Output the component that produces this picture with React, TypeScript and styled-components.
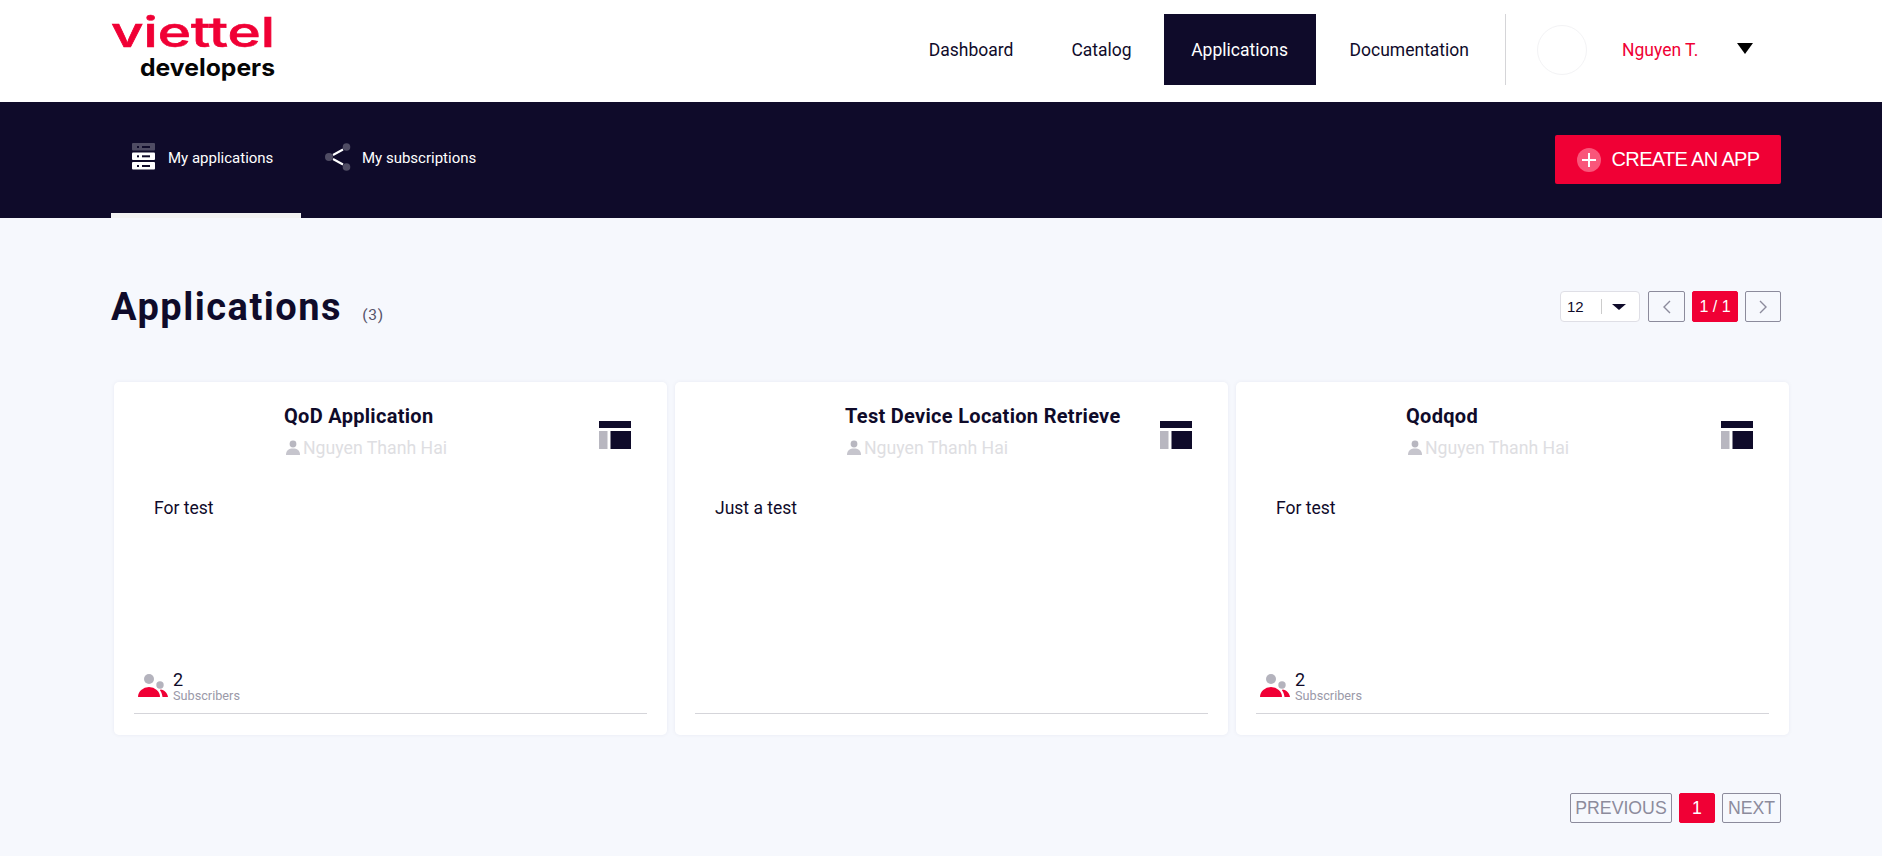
import React from "react";
import styled, { createGlobalStyle } from "styled-components";

const BODY_FONT = `"Roboto", "Noto Sans", sans-serif`;
const ARIAL = `"Liberation Sans", Arial, sans-serif`;
const NAVY = "#0f0b2a";
const RED = "#f00035";

const GlobalStyle = createGlobalStyle`
  * { box-sizing: border-box; }
  html, body { margin: 0; padding: 0; }
  body {
    background: #f6f8fd;
    font-family: ${BODY_FONT};
    color: ${NAVY};
    overflow: hidden;
  }
`;

const Page = styled.div`
  height: 856px;
  display: flex;
  flex-direction: column;
`;

const Header = styled.header`
  height: 102px;
  background: #fff;
  padding: 14px 129px 0 111px;
  display: flex;
  justify-content: space-between;
  align-items: flex-start;
`;

const LogoBox = styled.svg`
  display: block;
  margin-top: -8px;
  width: 170px;
  height: 82px;
`;

const NavArea = styled.div`
  display: flex;
  align-items: flex-start;
`;

const NavItem = styled.a<{ $active?: boolean }>`
  height: 71px;
  display: flex;
  align-items: center;
  padding: 0 ${(p) => (p.$active ? "27.5px" : "29px")};
  margin: 0 ${(p) => (p.$active ? "5px 0 3px" : "0")};
  font-size: 17.5px;
  color: ${(p) => (p.$active ? "#fff" : NAVY)};
  background: ${(p) => (p.$active ? NAVY : "transparent")};
`;

const UserBox = styled.div`
  height: 71px;
  margin-left: 7px;
  padding-left: 31px;
  border-left: 1px solid #d5d5d8;
  display: flex;
  align-items: center;
`;

const Avatar = styled.div`
  width: 50px;
  height: 50px;
  border-radius: 50%;
  border: 1px solid #f3f3f5;
`;

const UserName = styled.span`
  margin-left: 35px;
  width: 115px;
  font-size: 17.5px;
  color: ${RED};
`;

const CaretDown = styled.span`
  width: 0;
  height: 0;
  border-left: 8px solid transparent;
  border-right: 8px solid transparent;
  border-top: 11px solid #000;
`;

const HeaderCaret = styled(CaretDown)`
  margin-top: -3px;
`;

const SubBar = styled.div`
  height: 116px;
  background: ${NAVY};
  padding: 0 101px 0 111px;
  display: flex;
  justify-content: space-between;
`;

const Tabs = styled.div`
  display: flex;
`;

const Tab = styled.a<{ $active?: boolean }>`
  width: ${(p) => (p.$active ? "190px" : "auto")};
  height: 116px;
  padding: 41px 0 0 ${(p) => (p.$active ? "21px" : "24px")};
  display: flex;
  align-items: flex-start;
  gap: ${(p) => (p.$active ? "12px" : "11px")};
  font-size: 15px;
  line-height: 26px;
  color: #fff;
  border-bottom: 5px solid ${(p) => (p.$active ? "#f2f2f2" : "transparent")};
`;

const TabLabel = styled.span`
  margin-top: 2px;
`;

const TabIcon = styled.svg`
  display: block;
  flex: none;
`;

const CreateButton = styled.button`
  margin-top: 33px;
  width: 226px;
  height: 49px;
  border: 0;
  border-radius: 2px;
  background: ${RED};
  color: #fff;
  font-family: ${ARIAL};
  font-size: 20px;
  letter-spacing: -0.65px;
  display: flex;
  align-items: center;
  justify-content: center;
  gap: 11px;
  padding: 0;
`;

const PlusBadge = styled.span`
  width: 24px;
  height: 24px;
  border-radius: 50%;
  background: #f9567a;
  position: relative;
  &::before,
  &::after {
    content: "";
    position: absolute;
    background: #fff;
    left: 5px;
    top: 11px;
    width: 14px;
    height: 2px;
  }
  &::after {
    left: 11px;
    top: 5px;
    width: 2px;
    height: 14px;
  }
`;

const Main = styled.main`
  padding: 73px 101px 0 111px;
  flex: 1;
`;

const TitleRow = styled.div`
  height: 31px;
  display: flex;
  justify-content: space-between;
  align-items: center;
`;

const Title = styled.h1`
  margin: 9px 0 0;
  font-size: 38px;
  font-weight: 700;
  letter-spacing: 1.5px;
  line-height: 31px;
  display: flex;
  align-items: baseline;
`;

const Count = styled.span`
  margin-left: 20px;
  font-size: 15.5px;
  font-weight: 400;
  color: #55536a;
  letter-spacing: 0.8px;
`;

const Pager = styled.div`
  display: flex;
  gap: 7px;
`;

const SizeSelect = styled.div`
  width: 80px;
  height: 31px;
  background: #fff;
  border: 1px solid #dfdfe6;
  border-radius: 4px;
  font-family: ${ARIAL};
  font-size: 15px;
  display: flex;
  align-items: center;
  padding-left: 6px;
  margin-right: 1px;
`;

const SelectText = styled.span`
  width: 35px;
  height: 15px;
  line-height: 15px;
  border-right: 1px solid #ccc;
  margin-right: 10px;
`;

const SmallCaret = styled(CaretDown)`
  border-left-width: 7px;
  border-right-width: 7px;
  border-top: 6px solid ${NAVY};
`;

const PageButton = styled.button<{ $active?: boolean; $w: number; $h: number }>`
  width: ${(p) => p.$w}px;
  height: ${(p) => p.$h}px;
  padding: 0;
  border-radius: 2px;
  border: 1px solid ${(p) => (p.$active ? RED : "#8c8b9c")};
  background: ${(p) => (p.$active ? RED : "transparent")};
  color: ${(p) => (p.$active ? "#fff" : "#8c8b9c")};
  font-family: ${ARIAL};
  font-size: ${(p) => (p.$h === 31 ? 16 : 17.7)}px;
  display: flex;
  align-items: center;
  justify-content: center;
`;

const CardRow = styled.div`
  margin: 60px -8px 0 3px;
  display: grid;
  grid-template-columns: repeat(3, 553px);
  gap: 8px;
`;

const Card = styled.article`
  height: 353px;
  background: #fff;
  border-radius: 5px;
  box-shadow: 0 0 4px rgba(40, 40, 80, 0.06);
  padding: 22px 20px 21px 20px;
  display: flex;
  flex-direction: column;
`;

const CardTop = styled.div`
  display: flex;
  justify-content: space-between;
  padding-left: 150px;
  height: 58px;
`;

const CardTitle = styled.h3`
  margin: 0;
  font-size: 20px;
  font-weight: 700;
  line-height: 24px;
  letter-spacing: 0.3px;
  white-space: nowrap;
`;

const Author = styled.div`
  margin-top: 8px;
  padding-left: 1px;
  display: flex;
  align-items: center;
  gap: 2px;
  font-size: 17.7px;
  line-height: 24px;
  color: #dedee2;
  white-space: nowrap;
`;

const GridIcon = styled.svg`
  display: block;
  margin: 17px 16px 0 0;
`;

const Description = styled.p`
  margin: 35px 0 0 20px;
  font-size: 17.5px;
  line-height: 22px;
  flex: 1;
`;

const CardFooter = styled.div`
  height: 42px;
  border-bottom: 1px solid #d5d5da;
  padding-left: 4px;
  display: flex;
  align-items: flex-start;
  gap: 4px;
`;

const SubsIconBox = styled.svg`
  display: block;
  margin-top: 2px;
`;

const SubsNumber = styled.div`
  font-size: 18px;
  line-height: 17px;
  margin-top: -1px;
`;

const SubsLabel = styled.div`
  font-size: 12.7px;
  line-height: 14px;
  color: #9a99a8;
  margin-top: 1px;
`;

const BottomPager = styled.div`
  margin-top: 58px;
  display: flex;
  justify-content: flex-end;
  gap: 7px;
`;

const PersonSvg = styled.svg`
  display: block;
  flex: none;
`;

const ChevronSvg = styled.svg`
  display: block;
`;

const Logo = () => (
  <LogoBox viewBox="0 0 170 82">
    <text
      x="0"
      y="41"
      fontFamily="Inter, sans-serif"
      fontSize="41"
      fontWeight="500"
      fill={RED}
      stroke={RED}
      strokeWidth="0.6"
      textLength="164"
      lengthAdjust="spacingAndGlyphs"
    >
      viettel
    </text>
    <text
      x="29"
      y="70"
      fontFamily="Inter, sans-serif"
      fontSize="24"
      fontWeight="700"
      fill="#050505"
      textLength="135"
      lengthAdjust="spacingAndGlyphs"
    >
      developers
    </text>
  </LogoBox>
);

const ServerIcon = () => (
  <TabIcon width="24" height="27" viewBox="0 0 24 27">
    <rect x="0" y="0" width="23" height="7.5" rx="1" fill="#4f4c63" />
    <rect x="0" y="9.5" width="23" height="7.5" rx="1" fill="#fff" />
    <rect x="0" y="19" width="23" height="7.5" rx="1" fill="#fff" />
    <rect x="5" y="3" width="2" height="2" fill={NAVY} />
    <rect x="10" y="3" width="8" height="2" fill={NAVY} />
    <rect x="5" y="12.3" width="2" height="2" fill={NAVY} />
    <rect x="10" y="12.3" width="8" height="2" fill={NAVY} />
    <rect x="5" y="22" width="2" height="2" fill={NAVY} />
    <rect x="10" y="22" width="8" height="2" fill={NAVY} />
  </TabIcon>
);

const ShareIcon = () => (
  <TabIcon width="26" height="28" viewBox="0 0 26 28">
    <path d="M8 12 L18 6.5 M8 16 L18 21.5" stroke="#fff" strokeWidth="2" />
    <circle cx="4" cy="14" r="4" fill="#4f4c63" />
    <circle cx="21.5" cy="4" r="3.8" fill="#4f4c63" />
    <circle cx="21.5" cy="24" r="3.8" fill="#4f4c63" />
  </TabIcon>
);

const LayoutIcon = () => (
  <GridIcon width="32" height="28" viewBox="0 0 32 28">
    <rect x="0" y="0" width="32" height="7" fill={NAVY} />
    <rect x="0" y="10" width="8.5" height="18" fill="#b8b7c0" />
    <rect x="11.5" y="10" width="20.5" height="18" fill={NAVY} />
  </GridIcon>
);

const PersonIcon = () => (
  <PersonSvg width="16" height="16" viewBox="0 0 16 16">
    <circle cx="8" cy="4" r="3.4" fill="#b8b7c0" />
    <path d="M1 15 C1 10 4 8.5 8 8.5 C12 8.5 15 10 15 15 Z" fill="#c6c5cd" />
  </PersonSvg>
);

const SubscribersIcon = () => (
  <SubsIconBox width="31" height="25" viewBox="0 0 31 25">
    <circle cx="11" cy="5" r="5" fill="#b4b3bd" />
    <circle cx="22" cy="11" r="3.7" fill="#b4b3bd" />
    <path d="M0 23 A11 10 0 0 1 22 23 Z" fill={RED} />
    <path d="M22.5 15.5 C26.5 16 29.5 19 30 23 L24.5 23 C24.2 20.5 23.500 18 22 16.500 Z" fill={RED} />
  </SubsIconBox>
);

const Chevron = ({ dir }: { dir: "left" | "right" }) => (
  <ChevronSvg width="9" height="14" viewBox="0 0 9 14">
    <path
      d={dir === "left" ? "M8 1 L2 7 L8 13" : "M1 1 L7 7 L1 13"}
      fill="none"
      stroke="#8c8b9c"
      strokeWidth="1.4"
    />
  </ChevronSvg>
);

const apps = [
  { name: "QoD Application", text: "For test", subscribers: 2 },
  { name: "Test Device Location Retrieve", text: "Just a test", subscribers: 0 },
  { name: "Qodqod", text: "For test", subscribers: 2 },
];

export default function App() {
  return (
    <Page>
      <GlobalStyle />
      <Header>
        <Logo />
        <NavArea>
          <NavItem>Dashboard</NavItem>
          <NavItem>Catalog</NavItem>
          <NavItem $active>Applications</NavItem>
          <NavItem>Documentation</NavItem>
          <UserBox>
            <Avatar />
            <UserName>Nguyen T.</UserName>
            <HeaderCaret />
          </UserBox>
        </NavArea>
      </Header>
      <SubBar>
        <Tabs>
          <Tab $active>
            <ServerIcon />
            <TabLabel>My applications</TabLabel>
          </Tab>
          <Tab>
            <ShareIcon />
            <TabLabel>My subscriptions</TabLabel>
          </Tab>
        </Tabs>
        <CreateButton>
          <PlusBadge />
          CREATE AN APP
        </CreateButton>
      </SubBar>
      <Main>
        <TitleRow>
          <Title>
            Applications
            <Count>(3)</Count>
          </Title>
          <Pager>
            <SizeSelect>
              <SelectText>12</SelectText>
              <SmallCaret />
            </SizeSelect>
            <PageButton $w={37} $h={31}>
              <Chevron dir="left" />
            </PageButton>
            <PageButton $w={46} $h={31} $active>
              1 / 1
            </PageButton>
            <PageButton $w={36} $h={31}>
              <Chevron dir="right" />
            </PageButton>
          </Pager>
        </TitleRow>
        <CardRow>
          {apps.map((app) => (
            <Card key={app.name}>
              <CardTop>
                <div>
                  <CardTitle>{app.name}</CardTitle>
                  <Author>
                    <PersonIcon />
                    Nguyen Thanh Hai
                  </Author>
                </div>
                <LayoutIcon />
              </CardTop>
              <Description>{app.text}</Description>
              <CardFooter>
                {app.subscribers > 0 && (
                  <>
                    <SubscribersIcon />
                    <div>
                      <SubsNumber>{app.subscribers}</SubsNumber>
                      <SubsLabel>Subscribers</SubsLabel>
                    </div>
                  </>
                )}
              </CardFooter>
            </Card>
          ))}
        </CardRow>
        <BottomPager>
          <PageButton $w={102} $h={30}>PREVIOUS</PageButton>
          <PageButton $w={36} $h={30} $active>1</PageButton>
          <PageButton $w={59} $h={30}>NEXT</PageButton>
        </BottomPager>
      </Main>
    </Page>
  );
}
